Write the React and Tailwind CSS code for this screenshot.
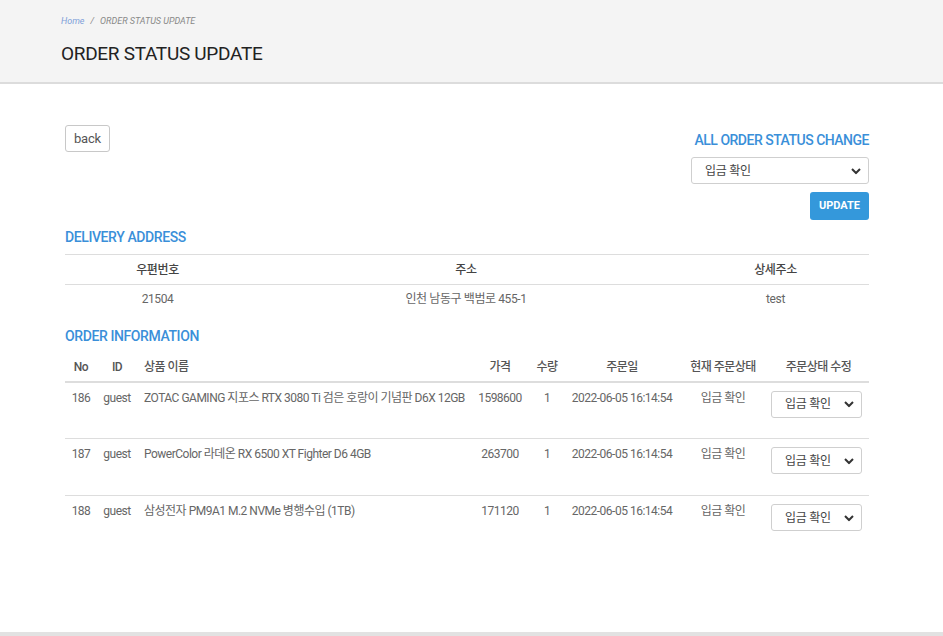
import React from 'react';

const orders = [
  { no: 186, id: 'guest', name: 'ZOTAC GAMING 지포스 RTX 3080 Ti 검은 호랑이 기념판 D6X 12GB', price: 1598600, qty: 1, date: '2022-06-05 16:14:54', status: '입금 확인' },
  { no: 187, id: 'guest', name: 'PowerColor 라데온 RX 6500 XT Fighter D6 4GB', price: 263700, qty: 1, date: '2022-06-05 16:14:54', status: '입금 확인' },
  { no: 188, id: 'guest', name: '삼성전자 PM9A1 M.2 NVMe 병행수입 (1TB)', price: 171120, qty: 1, date: '2022-06-05 16:14:54', status: '입금 확인' },
];

const statuses = ['입금 확인', '배송 준비', '배송 중', '배송 완료'];

const font = "font-['Roboto','Noto_Sans_CJK_KR',sans-serif]";

// Select box with chevron
const StatusSelect = ({ className }) => (
  <div className={`relative ${className}`}>
    <select
      defaultValue="입금 확인"
      className="w-full h-full appearance-none border border-[#cfcfcf] rounded-[3px] bg-white pl-[13px] text-[12px] tracking-[-0.3px] text-[#444] outline-none"
    >
      {statuses.map((s) => (
        <option key={s} value={s}>{s}</option>
      ))}
    </select>
    <svg className="absolute right-[8px] top-1/2 -translate-y-1/2 pointer-events-none" width="10" height="7" viewBox="0 0 10 7">
      <path d="M1 1.5 L5 5.5 L9 1.5" fill="none" stroke="#333" strokeWidth="2" />
    </svg>
  </div>
);

const App = () => {
  return (
    <div className={`${font} min-h-[636px] bg-white flex flex-col`}>
      {/* Page header */}
      <div className="bg-[#f4f4f4] border-b-2 border-[#dcdcdc] h-[84px] pl-[61px]">
        <div className="pt-[15px] text-[9px] italic text-[#888] leading-[12px]">
          <span className="text-[#7d9fd9]">Home</span>
          <span className="mx-[6px]">/</span>
          <span>ORDER STATUS UPDATE</span>
        </div>
        <h1 className="mt-[14px] text-[19px] tracking-[-0.3px] text-[#222] leading-[26px]">ORDER STATUS UPDATE</h1>
      </div>

      <div className="flex-1 w-[804px] ml-[65px] pt-[41px]">
        {/* Top controls */}
        <div className="flex justify-between">
          <button className="h-[27px] px-[8px] border border-[#c8c8c8] rounded-[3px] text-[13px] tracking-[-0.2px] text-[#555] bg-white">back</button>
          <div className="w-[178px] flex flex-col items-end pt-[6px]">
            <div className="whitespace-nowrap text-[14px] font-medium tracking-[-0.5px] text-[#3a8fd9] leading-[18px]">ALL ORDER STATUS CHANGE</div>
            <StatusSelect className="w-[178px] h-[27px] mt-[8px]" />
            <button className="mt-[8px] h-[28px] w-[59px] bg-[#3498db] rounded-[3px] text-white text-[11px] font-bold">UPDATE</button>
          </div>
        </div>

        {/* Delivery address */}
        <div className="mt-[8px] text-[14px] font-medium tracking-[-0.4px] text-[#3a8fd9] leading-[18px]">DELIVERY ADDRESS</div>
        <table className="mt-[8px] w-full border-collapse table-fixed text-[12px] tracking-[-0.4px]">
          <colgroup>
            <col className="w-[185px]" />
            <col className="w-[432px]" />
            <col />
          </colgroup>
          <thead>
            <tr className="border-t border-b border-[#dddddd] h-[30px]">
              <th className="font-medium text-[#444]">우편번호</th>
              <th className="font-medium text-[#444]">주소</th>
              <th className="font-medium text-[#444]">상세주소</th>
            </tr>
          </thead>
          <tbody>
            <tr className="h-[28px] text-[#666]">
              <td className="text-center">21504</td>
              <td className="text-center">인천 남동구 백범로 455-1</td>
              <td className="text-center">test</td>
            </tr>
          </tbody>
        </table>

        {/* Order information */}
        <div className="mt-[14px] text-[14px] font-medium tracking-[-0.4px] text-[#3a8fd9] leading-[18px]">ORDER INFORMATION</div>
        <table className="mt-[13px] w-full border-collapse table-fixed text-[12px] tracking-[-0.5px] leading-[18px]">
          <colgroup>
            <col className="w-[32px]" />
            <col className="w-[40px]" />
            <col className="w-[335px]" />
            <col className="w-[56px]" />
            <col className="w-[38px]" />
            <col className="w-[112px]" />
            <col className="w-[90px]" />
            <col />
          </colgroup>
          <thead>
            <tr className="border-b-2 border-[#dddddd] h-[24px] text-[#555]">
              <th className="font-medium text-center align-top">No</th>
              <th className="font-medium text-center align-top">ID</th>
              <th className="font-medium text-left pl-[7px] align-top">상품 이름</th>
              <th className="font-medium text-center align-top">가격</th>
              <th className="font-medium text-center align-top">수량</th>
              <th className="font-medium text-center align-top">주문일</th>
              <th className="font-medium text-center align-top">현재 주문상태</th>
              <th className="font-medium text-center align-top">주문상태 수정</th>
            </tr>
          </thead>
          <tbody>
            {orders.map((o) => (
              <tr key={o.no} className="border-b border-[#dddddd] h-[57px] text-[#666] last:border-b-0">
                <td className="text-center align-top pt-[6px]">{o.no}</td>
                <td className="text-center align-top pt-[6px]">{o.id}</td>
                <td className="text-left align-top pt-[6px] pl-[7px] whitespace-nowrap">{o.name}</td>
                <td className="text-center align-top pt-[6px]">{o.price}</td>
                <td className="text-center align-top pt-[6px]">{o.qty}</td>
                <td className="text-center align-top pt-[6px] whitespace-nowrap">{o.date}</td>
                <td className="text-center align-top pt-[6px]">{o.status}</td>
                <td className="align-top pt-[8px] pl-[3px]">
                  <StatusSelect className="w-[91px] h-[27px]" />
                </td>
              </tr>
            ))}
          </tbody>
        </table>
      </div>

      <div className="h-[4px] bg-[#e2e2e2]" />
    </div>
  );
};

export default App;
